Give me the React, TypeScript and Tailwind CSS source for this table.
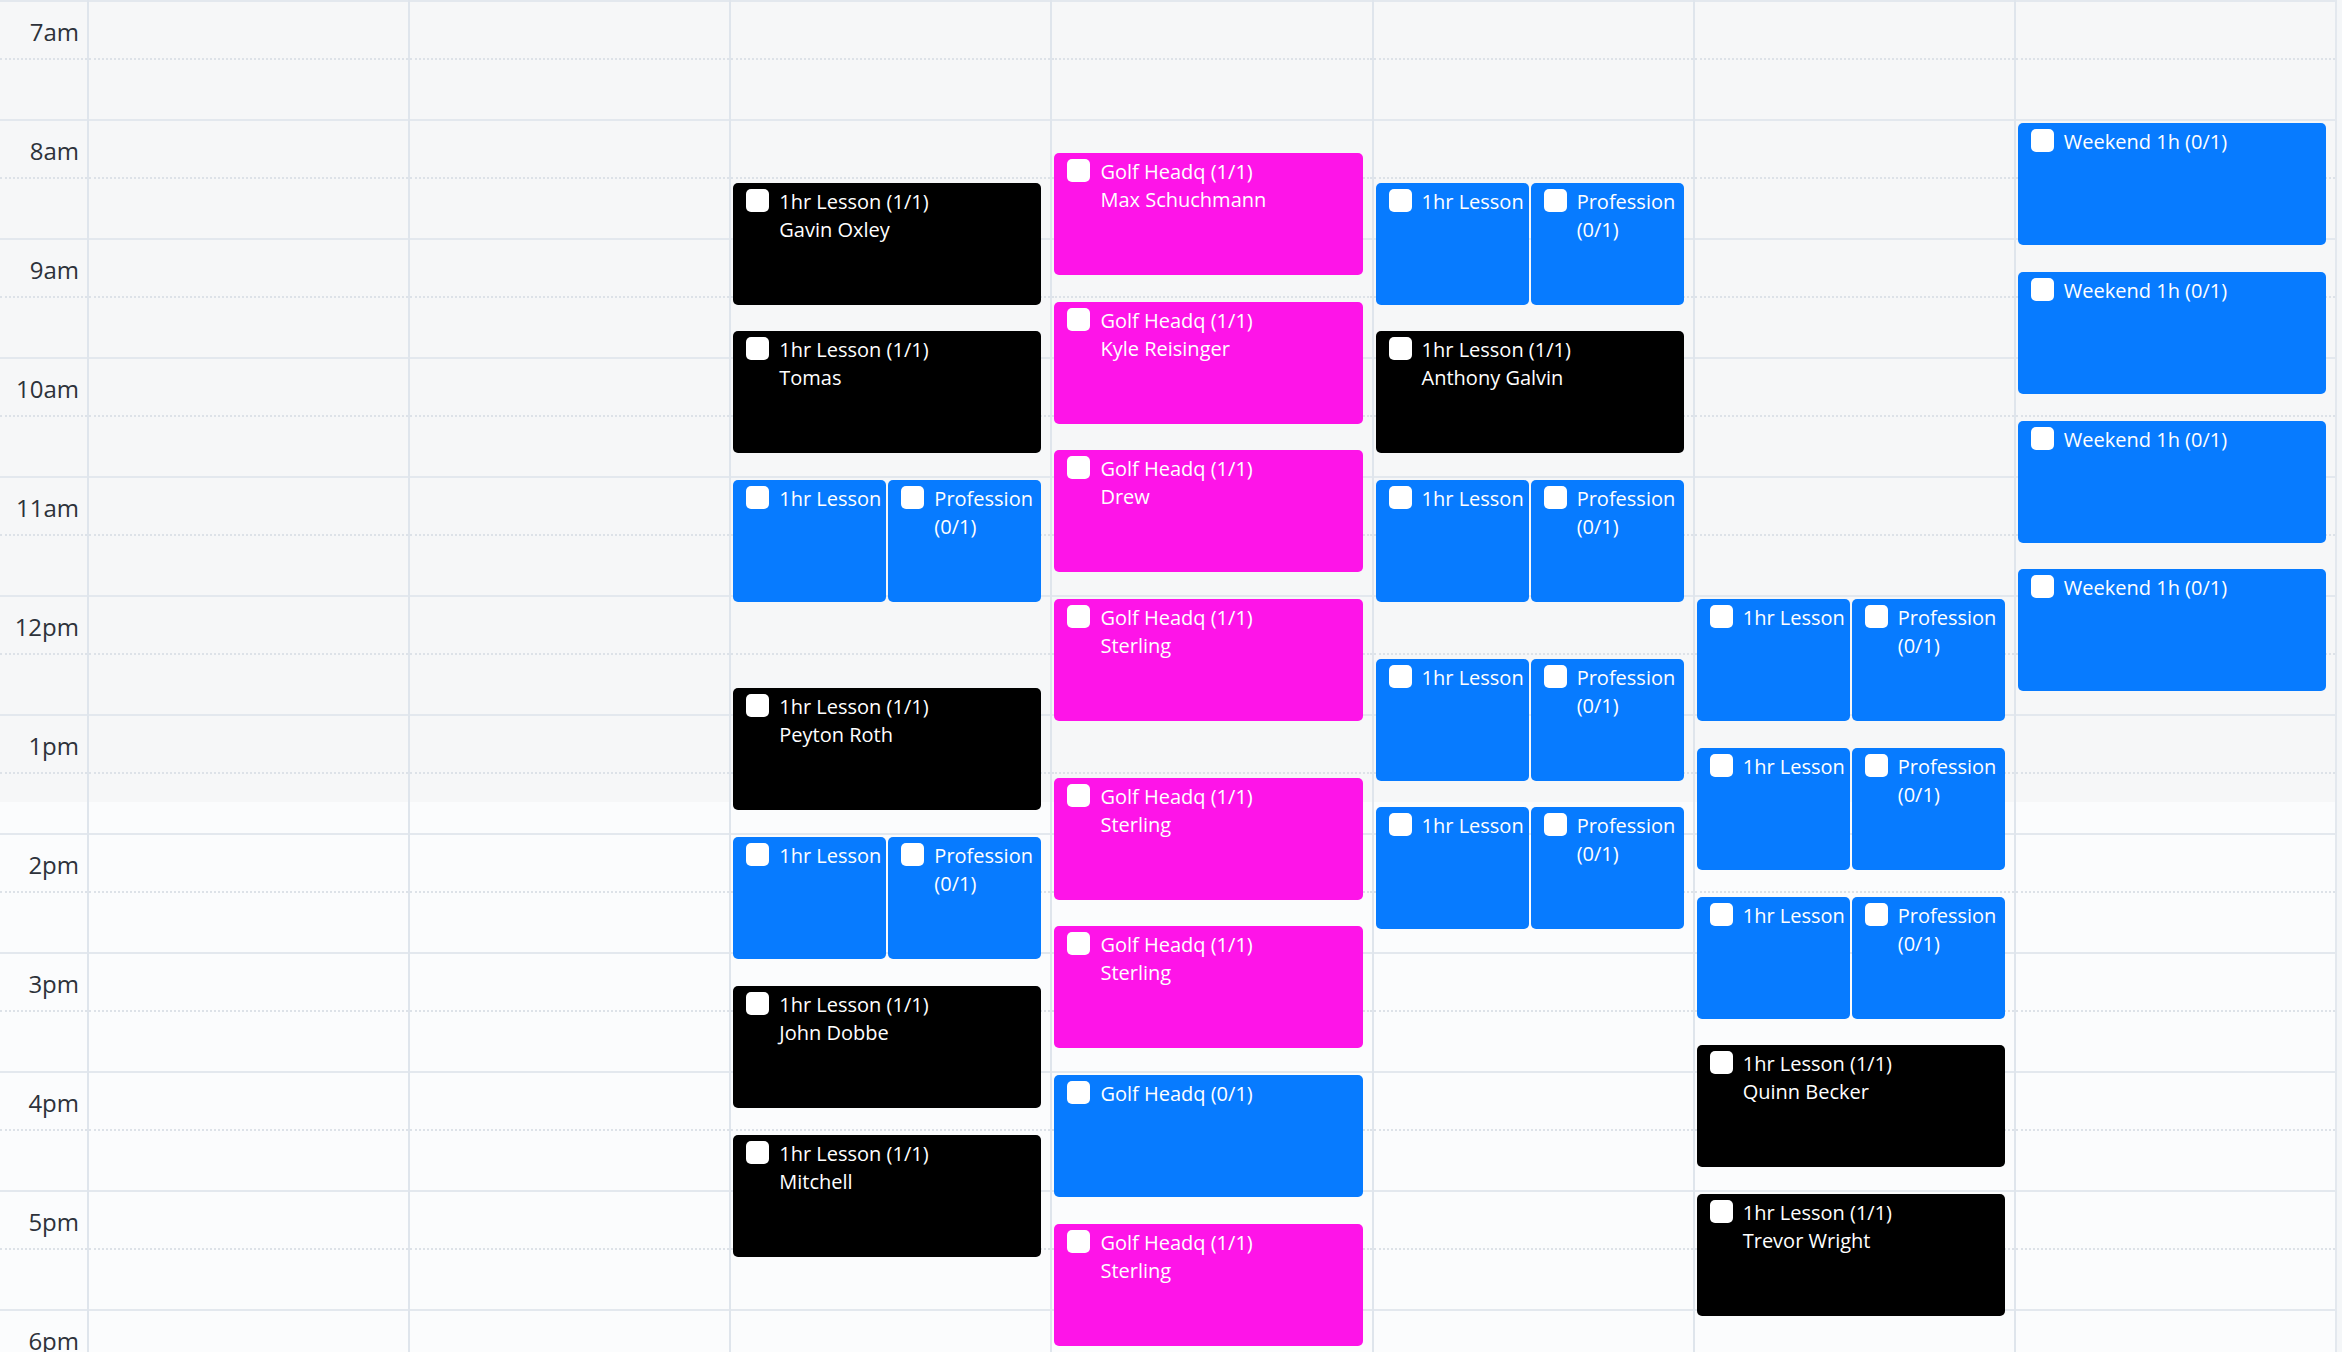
import React from 'react';

type Kind = 'black' | 'pink' | 'blue' | 'split';

type CalEvent = {
    start: number;
    kind: Kind;
    title?: string;
    name?: string;
};

const HOUR = 119;

const hours = ['7am', '8am', '9am', '10am', '11am', '12pm', '1pm', '2pm', '3pm', '4pm', '5pm', '6pm'];

const lesson = (start: number, name: string): CalEvent => ({ start, kind: 'black', title: '1hr Lesson (1/1)', name });
const golf = (start: number, name: string): CalEvent => ({ start, kind: 'pink', title: 'Golf Headq (1/1)', name });
const split = (start: number): CalEvent => ({ start, kind: 'split' });
const weekend = (start: number): CalEvent => ({ start, kind: 'blue', title: 'Weekend 1h (0/1)' });

const days: CalEvent[][] = [
    [],
    [],
    [
        lesson(8.5, 'Gavin Oxley'),
        lesson(9.75, 'Tomas'),
        split(11),
        lesson(12.75, 'Peyton Roth'),
        split(14),
        lesson(15.25, 'John Dobbe'),
        lesson(16.5, 'Mitchell'),
    ],
    [
        golf(8.25, 'Max Schuchmann'),
        golf(9.5, 'Kyle Reisinger'),
        golf(10.75, 'Drew'),
        golf(12, 'Sterling'),
        golf(13.5, 'Sterling'),
        golf(14.75, 'Sterling'),
        { start: 16, kind: 'blue', title: 'Golf Headq (0/1)' },
        golf(17.25, 'Sterling'),
    ],
    [
        split(8.5),
        lesson(9.75, 'Anthony Galvin'),
        split(11),
        split(12.5),
        split(13.75),
    ],
    [
        split(12),
        split(13.25),
        split(14.5),
        lesson(15.75, 'Quinn Becker'),
        lesson(17, 'Trevor Wright'),
    ],
    [
        weekend(8),
        weekend(9.25),
        weekend(10.5),
        weekend(11.75),
    ],
];

const bgFor: Record<Exclude<Kind, 'split'>, string> = {
    black: 'bg-black',
    pink: 'bg-[#fe14e8]',
    blue: 'bg-[#077bff]',
};

const Checkbox = () => (
    <span className="mt-px h-[23px] w-[23px] shrink-0 rounded-[5px] bg-white" />
);

const Card = ({ bg, children, nowrap }: { bg: string; children: React.ReactNode; nowrap?: boolean }) => (
    <div className={`flex h-full min-w-0 flex-1 items-start gap-[10px] overflow-hidden rounded-[5px] pl-[13px] pt-[5px] text-[20px] leading-[28px] text-white ${bg}`}>
        <Checkbox />
        <div className={nowrap ? 'whitespace-nowrap' : ''}>{children}</div>
    </div>
);

const SlotCell = ({ label }: { label?: string }) => (
    <div className="h-[119px] shrink-0 border-t-2 border-[#e3e8ee]">
        <div className="h-[58px] border-b-2 border-dotted border-[#dde2e8]">
            {label && (
                <div className="pr-[8px] pt-[14px] text-right text-[24px] leading-[32px] text-[#2d323a]">{label}</div>
            )}
        </div>
    </div>
);

const DayColumn = ({ events }: { events: CalEvent[] }) => (
    <div className="relative flex-1 border-l-2 border-[#dfe5ec]">
        {hours.map((h) => <SlotCell key={h} />)}
        {events.map((ev, i) => {
            const top = (ev.start - 7) * HOUR + 4;
            return (
                <div key={i} className="absolute left-[2px] right-[9px] flex gap-[2px]" style={{ top, height: 122 }}>
                    {ev.kind === 'split' ? (
                        <>
                            <Card bg={bgFor.blue} nowrap>1hr Lesson</Card>
                            <Card bg={bgFor.blue}>Profession<br />(0/1)</Card>
                        </>
                    ) : (
                        <Card bg={bgFor[ev.kind]}>
                            <div>{ev.title}</div>
                            {ev.name && <div>{ev.name}</div>}
                        </Card>
                    )}
                </div>
            );
        })}
    </div>
);

export default function App() {
    return (
        <div className="h-[1352px] w-full overflow-hidden bg-[linear-gradient(to_bottom,#f6f7f8_0px,#f6f7f8_802px,#fbfcfd_802px)] font-['Open_Sans',sans-serif]">
            <div className="flex">
                <div className="w-[87px] shrink-0">
                    {hours.map((h) => <SlotCell key={h} label={h} />)}
                </div>
                {days.map((events, i) => <DayColumn key={i} events={events} />)}
                <div className="w-[7px] shrink-0 border-l-2 border-[#e3e8ee] bg-[#f4f6f8]" />
            </div>
        </div>
    );
}
